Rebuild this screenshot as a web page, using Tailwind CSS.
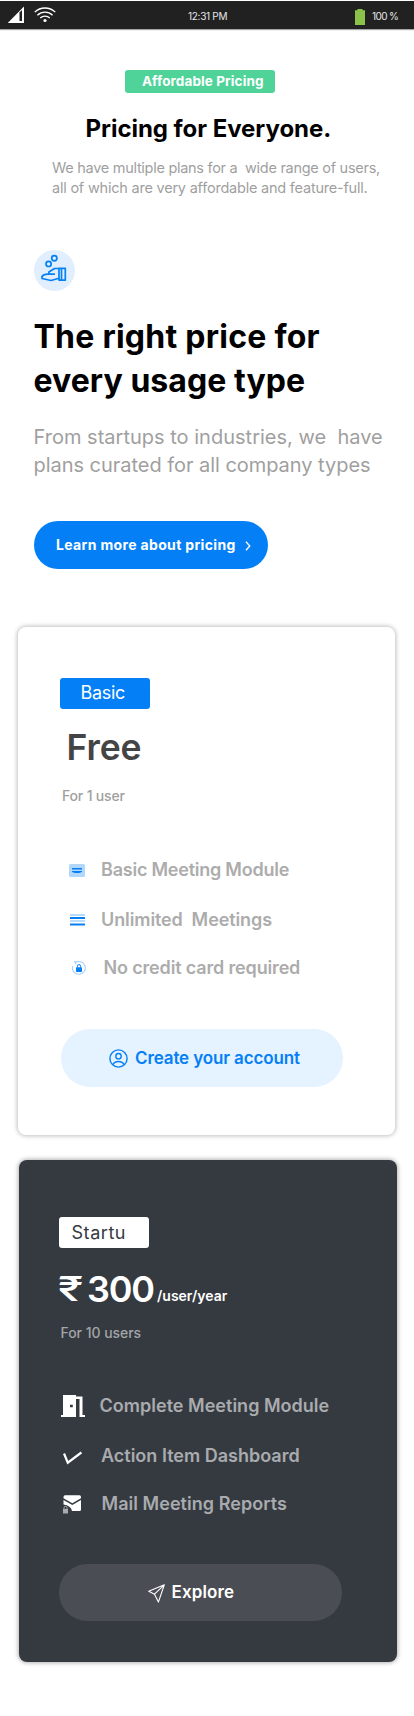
<!DOCTYPE html>
<html lang="en">
<head>
<meta charset="utf-8">
<title>Pricing</title>
<script src="https://cdn.jsdelivr.net/npm/@tailwindcss/browser@4"></script>
</head>
<body class="bg-white">
<div class="w-[414px] h-[1716px] overflow-hidden bg-white font-['Inter',sans-serif] whitespace-nowrap flex flex-col items-start">
  <header class="mt-px w-full h-7 bg-[#212121] shadow-[0_1px_1px_rgba(0,0,0,0.35)] flex items-center text-[10px] text-[#e6e6e6] shrink-0">
    <svg class="ml-[7px] w-[18px] h-[18px]" viewBox="0 0 18 18"><path d="M17 .5V17H.7z" fill="#fff"/><path d="M12.500 6.500 15 4v11h-2.500z" fill="#212121"/></svg>
    <svg class="ml-[9px] w-[22px] h-[16px]" viewBox="0 0 22 16" fill="none" stroke="#fff" stroke-width="1.300"><path d="M.7 5.100C6.500-.4 15.500-.4 21.300 5.100M3.400 8.200c4.300-4 10.900-4 15.200 0M6.200 11c2.700-2.500 6.900-2.500 9.600 0"/><circle cx="11" cy="13.500" r="1.600" fill="#fff" stroke="none"/></svg>
    <span class="ml-[132px] mt-[3px] w-[50px] tracking-[-0.3px]">12:31 PM</span>
    <svg class="ml-[117px] mt-[3px] w-[10px] h-[16px]" viewBox="0 0 10 16"><path d="M2.500 0h5v1.200H10V16H0V1.200h2.500z" fill="#8bc34a"/></svg>
    <span class="ml-[7px] mt-[3px] tracking-[-0.6px]">100 %</span>
  </header>

  <div class="mt-[41px] ml-[125px] w-[150px] h-[23px] rounded-[3px] bg-[#4fd399] pl-[17px] text-[13.5px] leading-[22px] font-bold tracking-[0.11px] text-white shrink-0">Affordable Pricing</div>
  <h1 class="mt-5 ml-[85.5px] text-[24px] leading-8 font-bold tracking-[-0.04px] text-black">Pricing for Everyone.</h1>
  <p class="mt-[13px] ml-[52px] text-[14.5px] leading-5 text-[#9f9f9f]"><span class="block tracking-[-0.281px]">We have multiple plans for a&nbsp; wide range of users,</span><span class="block tracking-[-0.215px]">all of which are very affordable and feature-full.</span></p>

  <div class="mt-[52px] ml-[34px] size-[41px] rounded-full bg-[#e0eefd] shrink-0">
    <svg class="size-[41px]" viewBox="0 0 41 41" fill="none" stroke="#0580f5" stroke-width="1.700" stroke-linejoin="round"><circle cx="20.300" cy="8.300" r="2.600"/><circle cx="14.600" cy="13.900" r="2.600"/><path d="M25 18.500h-4.500l-5.600 3.500v2.200h6M15 24.200c-3-.2-6 .7-7 2.300v2l9 2 8-2.200"/><path d="M25 18.300h6.300v11.800H25zM27.500 18.500V30"/></svg>
  </div>
  <h2 class="mt-6 ml-[33.5px] text-[32px] leading-[44px] font-bold text-black"><span class="block tracking-[0.25px]">The right price for</span><span class="block tracking-[0.06px]">every usage type</span></h2>
  <p class="mt-5 ml-[33.5px] text-[20px] leading-7 text-[#9f9f9f]"><span class="block tracking-[0.01px]">From startups to industries, we&nbsp; have</span><span class="block tracking-[-0.038px]">plans curated for all company types</span></p>
  <button class="mt-[42px] ml-[34px] w-[234px] h-12 rounded-full bg-[#047ff6] text-white flex items-center pl-[22px] text-[14px] font-bold tracking-[0.343px] shrink-0"><span class="pb-px">Learn more about pricing</span><svg class="ml-[9px] mt-px w-[6px] h-[10px]" viewBox="0 0 6 10" fill="none" stroke="#fff" stroke-width="1.300"><path d="M1 .7 4.800 5 1 9.300"/></svg></button>

  <section class="mt-[58px] ml-[18px] w-[377px] h-[508px] rounded-[8px] bg-white shadow-[0_0_4px_1px_rgba(0,0,0,0.25)] flex flex-col items-start shrink-0">
    <div class="mt-[51px] ml-[42px] w-[90px] h-[31px] rounded-[3px] bg-[#047ff6] text-white text-[18px] leading-[30px] tracking-[-0.3px] pl-[20.500px]">Basic</div>
    <div class="mt-[17px] ml-[48.500px] text-[35.5px] leading-[44px] font-semibold tracking-[-0.1px] text-[#444]">Free</div>
    <div class="mt-4 ml-[44px] text-[14px] leading-5 font-medium tracking-[-0.18px] text-[#a0a0a0]">For 1 user</div>
    <ul class="mt-[52px] ml-[51px] text-[18px] leading-6 font-semibold text-[#acacac]">
      <li class="flex items-center"><svg class="w-4 h-[13px]" viewBox="0 0 16 13"><rect width="16" height="13" rx="1.500" fill="#b1d7fc"/><path d="M3 4h10v1.500H3zM3 7h10v1l-3 1H6L3 8z" fill="#047ff6"/></svg><span class="ml-4 tracking-[-0.23px]">Basic Meeting Module</span></li>
      <li class="mt-[26px] flex items-center"><svg class="ml-px w-[15px] h-3" viewBox="0 0 15 12"><path d="M0 0h15v2H0zM0 6h15v2H0z" fill="#b8dbfc"/><path d="M0 3h15v2H0zM0 9.500h15v2H0z" fill="#047ff6"/></svg><span class="ml-4 tracking-[-0.1px]">Unlimited&nbsp; Meetings</span></li>
      <li class="mt-6 flex items-center"><svg class="ml-[3px] w-[14px] h-[14px]" viewBox="0 0 14 14"><path d="M3 1.800A6.400 6.400 0 1 1 .7 5.200M1.700.800h2.100v2.500" fill="none" stroke="#a5d0fc" stroke-width="1.100"/><rect x="4" y="6.300" width="6" height="4.700" rx=".7" fill="#047ff6"/><path d="M5.400 6.500V5.200a1.600 1.600 0 0 1 3.200 0v1.300" fill="none" stroke="#047ff6" stroke-width="1"/></svg><span class="ml-[17.500px] tracking-[-0.16px]">No credit card required</span></li>
    </ul>
    <button class="mt-[49px] ml-[42.500px] w-[282px] h-[58px] rounded-full bg-[#e5f2ff] text-[#047ff6] flex items-center text-[17px] font-semibold tracking-[-0.12px]"><svg class="ml-12 mt-px size-[19px]" viewBox="0 0 19 19" fill="none" stroke="#047ff6" stroke-width="1.400"><circle cx="9.500" cy="9.500" r="8.600"/><circle cx="9.500" cy="7.200" r="2.700"/><path d="M3.900 15.800c.9-2.100 2.900-3.300 5.600-3.300s4.700 1.200 5.600 3.300"/></svg><span class="ml-[7.500px] pt-px">Create your account</span></button>
  </section>

  <section class="mt-[25px] ml-[19px] w-[378px] h-[502px] rounded-[8px] bg-[#353a41] shadow-[0_0_4px_1px_rgba(0,0,0,0.3)] flex flex-col items-start shrink-0">
    <div class="mt-[57px] ml-10 w-[90px] h-[31px] rounded-[3px] bg-white text-[#353a41] text-[18px] leading-[31px] tracking-[0.55px] pl-[12.500px]">Startu</div>
    <div class="mt-[19px] ml-[39px] h-11 flex items-start text-white font-semibold"><span class="w-[29px] text-[34px] leading-[44px] font-medium origin-left scale-x-[1.35]">₹</span><span class="w-[69px] text-[36px] leading-[44px] tracking-[-1.2px]">300</span><span class="pt-[17px] ml-px text-[14px] leading-6">/user/year</span></div>
    <div class="mt-3 ml-[41.500px] text-[14px] leading-5 font-medium tracking-[-0.04px] text-[#a3a5a8]">For 10 users</div>
    <ul class="mt-[51px] ml-[42px] text-[18px] leading-6 font-semibold text-[#a9abae]">
      <li class="flex items-center"><svg class="w-6 h-[22px]" viewBox="0 0 24 22"><path d="M2 0h13v1.500h6.500V20H24v2h-5.500V4H15v18H0v-2h2zM9 9.700v2.600h2.800V9.700z" fill="#fff" fill-rule="evenodd"/></svg><span class="ml-[14.500px] tracking-[0.02px]">Complete Meeting Module</span></li>
      <li class="mt-[26px] flex items-center"><svg class="ml-[2px] mt-[3px] w-[19px] h-[14px]" viewBox="0 0 19 14" fill="none" stroke="#fff" stroke-width="2.200"><path d="M1 2.500 4.800 11.700 18.400 1.500"/></svg><span class="ml-[19px]">Action Item Dashboard</span></li>
      <li class="mt-6 flex items-center"><svg class="ml-[2px] w-[18px] h-[19px]" viewBox="0 0 18 19"><path d="M2 .3h14.500Q18 .3 18 2v1.200L9.300 8.300.5 3.200V2Q.5.300 2 .3z" fill="#fff"/><path d="M18 5v9.500q0 1.500-1.500 1.500H9Q8 10.500.5 9.500V5l8.800 5z" fill="#fff"/><path d="M0 14h5v4.500H0z" fill="#a9abae"/><path d="M1 14v-1.200a1.500 1.500 0 0 1 3 0V14" fill="none" stroke="#a9abae"/></svg><span class="ml-[20.500px] tracking-[0.04px]">Mail Meeting Reports</span></li>
    </ul>
    <button class="mt-12 ml-10 w-[283px] h-[57px] rounded-full bg-[#4a4d54] text-white flex items-center text-[17px] font-semibold tracking-[0.125px]"><svg class="ml-[89px] mt-[2px] w-[17px] h-[19px]" viewBox="0 0 17 19" fill="none" stroke="#fff" stroke-width="1.100" stroke-linejoin="round"><path d="M16.300.800.700 7.300 6.500 10.200 10.400 18.100zM16.300.800 6.500 10.200"/></svg><span class="ml-[6.500px] pt-px">Explore</span></button>
  </section>
</div>
</body>
</html>
